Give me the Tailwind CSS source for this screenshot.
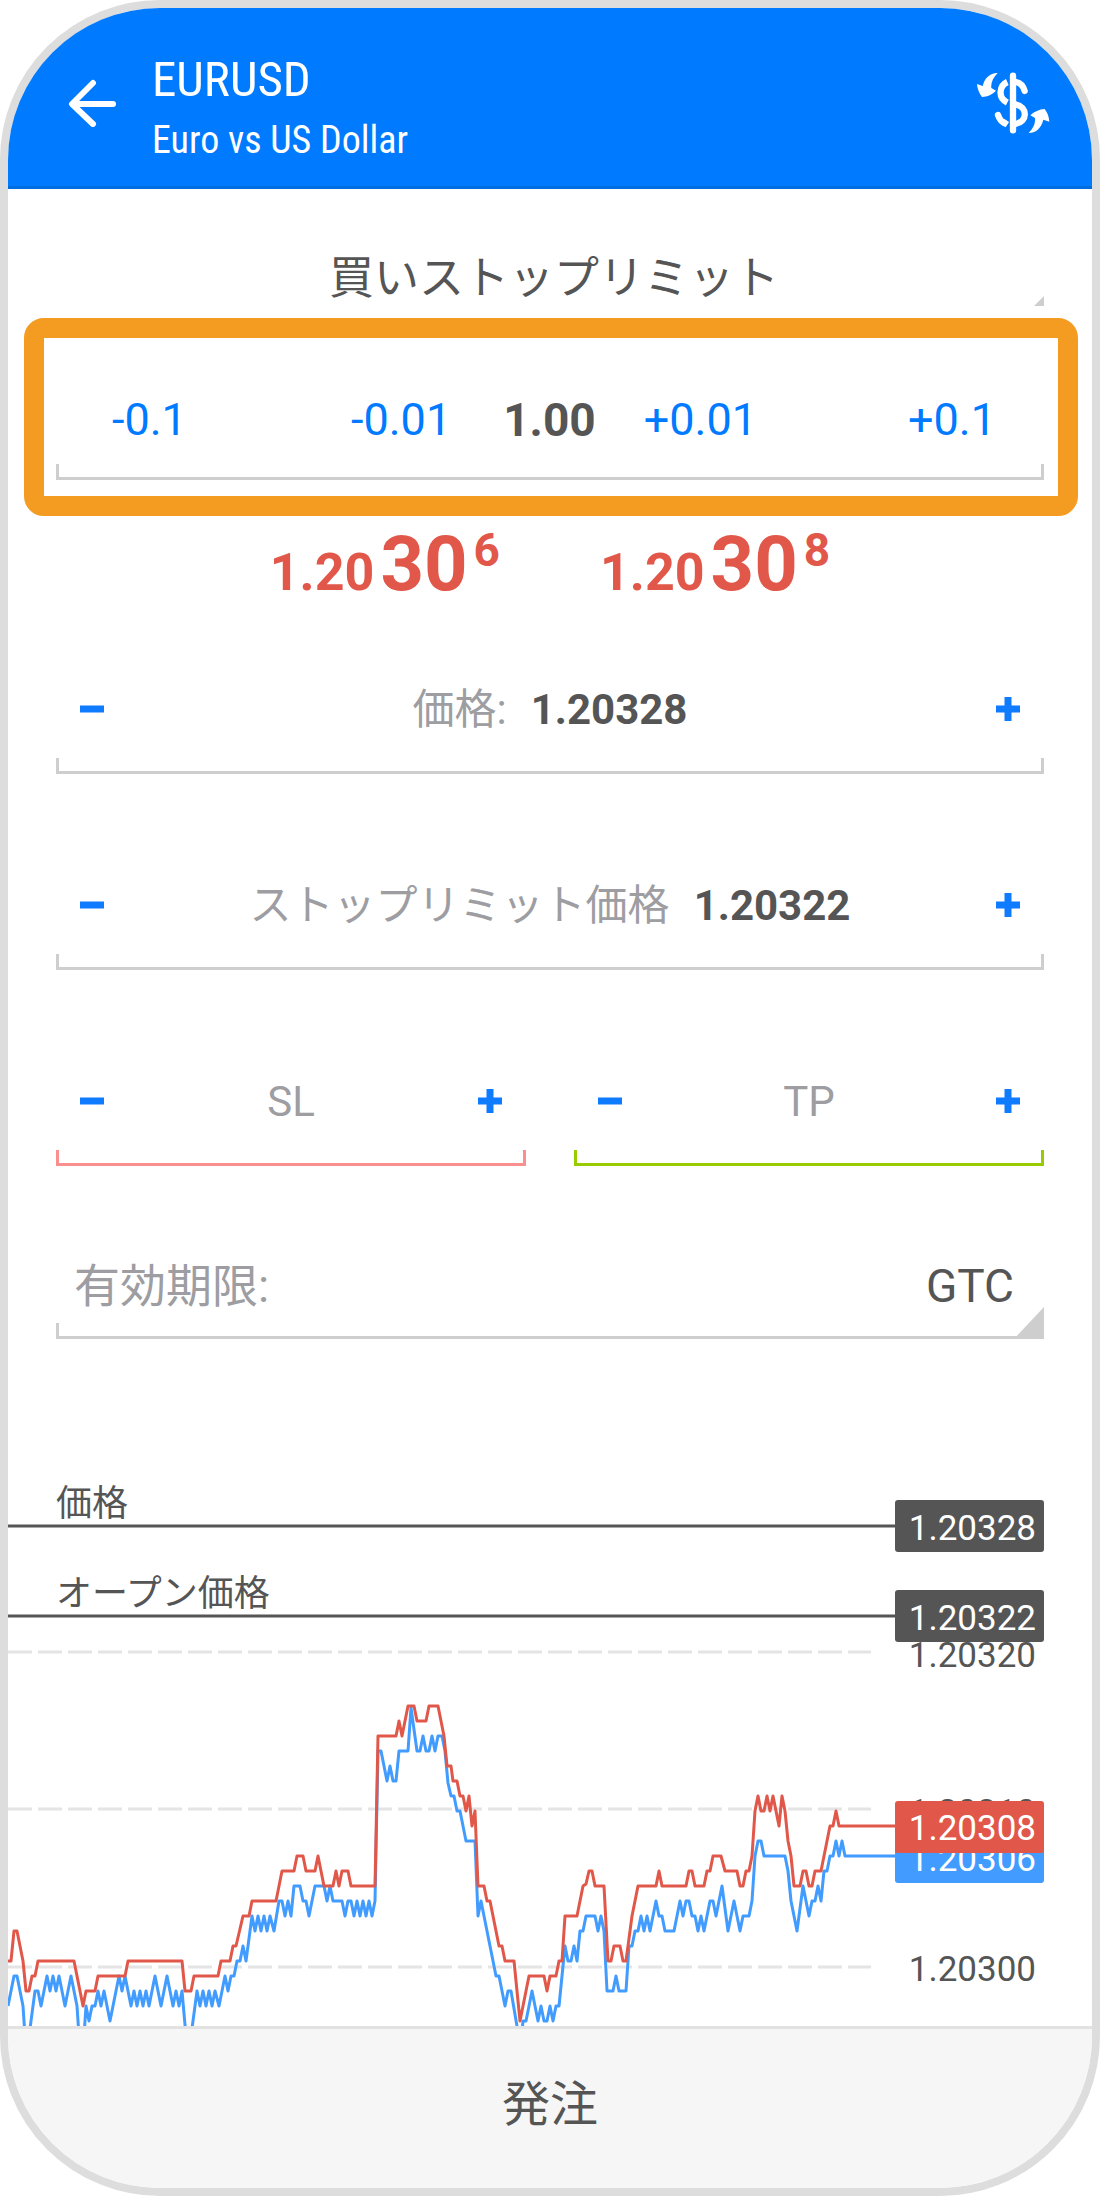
<!DOCTYPE html>
<html lang="ja">
<head>
<meta charset="utf-8">
<meta name="viewport" content="width=device-width, initial-scale=1">
<title>EURUSD 注文</title>
<script src="https://cdn.jsdelivr.net/npm/@tailwindcss/browser@4"></script>
</head>
<body class="bg-white font-['Roboto','Noto_Sans_CJK_JP',sans-serif] text-[#555555]">
<div class="flex min-h-screen flex-col overflow-hidden rounded-[160px] border-8 border-[#dddddd] bg-white">

  <header class="flex h-[181px] items-center border-b-3 border-[#006ee0] bg-[#007aff] pt-3 pr-[42px] pl-15 text-white">
    <button type="button" aria-label="戻る" class="shrink-0">
      <svg class="h-12 w-12" viewBox="0 0 48 48" fill="none" stroke="currentColor" stroke-width="6" stroke-linecap="round" stroke-linejoin="round"><path d="M25 4 4 25l21 20M6 25h39"/></svg>
    </button>
    <div class="flex-1 pt-3 pl-9 font-['Roboto_Condensed','Liberation_Sans_Narrow','Roboto',sans-serif]">
      <h1 class="text-[49px] leading-[62px]">EURUSD</h1>
      <p class="text-[38px] leading-[58px]">Euro vs US Dollar</p>
    </div>
    <button type="button" aria-label="売買" class="shrink-0">
      <svg class="h-[62px] w-[74px]" viewBox="50 42 222 184" fill="none" stroke="currentColor" stroke-width="19" stroke-linecap="round">
        <path d="M161 52V216"/>
        <path d="M170 71Q190 75 196 98M116 170Q122 188 135 194"/>
        <path stroke-linecap="butt" d="M144 71C120 82 114 118 144 133M168 138C206 146 206 190 168 197M144 199L130 190"/>
        <path fill="currentColor" stroke="none" d="M115 44C94 43 76 58 70 83L53 77C54 92 60 106 68 116C84 115 100 108 110 97L96 89C94 74 101 58 115 44ZM208 224C228 224 246 210 252 184L270 190C269 174 264 162 256 152C240 153 224 160 213 171L227 179C229 194 222 210 208 224Z"/>
      </svg>
    </button>
  </header>

  <main class="flex flex-1 flex-col">
    <form id="order" class="flex flex-col">
      <div class="relative mx-12 mt-14 mb-3">
        <select aria-label="注文タイプ" class="h-[61px] w-full appearance-none bg-transparent pb-1 pl-2 text-center text-[45px]">
          <option>買いストップリミット</option>
        </select>
        <svg class="pointer-events-none absolute right-0 bottom-0 h-[10px] w-[10px]" viewBox="0 0 10 10" fill="#cecece"><path d="M10 0V10H0z"/></svg>
      </div>

      <div class="mr-[14px] ml-4 rounded-[20px] border-20 border-[#f49b22] pt-[50px] pr-[14px] pb-4 pl-3">
        <div class="grid grid-cols-[1fr_auto_1fr] items-center pr-12 pl-14 text-[45px] leading-[64px] text-[#007aff]">
          <button type="button" class="justify-self-start">-0.1</button>
          <div class="flex items-center">
            <button type="button">-0.01</button>
            <input aria-label="数量" inputmode="decimal" value="1.00" class="mr-12 ml-13 field-sizing-content text-center text-[46px] font-bold text-[#555555]">
            <button type="button">+0.01</button>
          </div>
          <button type="button" class="justify-self-end">+0.1</button>
        </div>
        <div class="mt-3 h-4 border-x-3 border-b-3 border-[#cecece]"></div>
      </div>

      <div class="flex h-[161px] justify-center gap-25 pt-2 font-bold text-[#e1584a]">
        <p class="flex items-baseline gap-1.5"><span class="text-[52px]">1.20</span><span class="text-[76px] leading-[80px]">30</span><sup class="-top-6 text-[46px]">6</sup></p>
        <p class="flex items-baseline gap-1.5"><span class="text-[52px]">1.20</span><span class="text-[76px] leading-[80px]">30</span><sup class="-top-6 text-[46px]">8</sup></p>
      </div>

      <div class="mx-12">
        <div class="flex h-16 items-center justify-between px-6 text-[42px]">
          <button type="button" aria-label="価格を下げる" class="text-[#0f7bff]"><svg class="h-6 w-6" viewBox="0 0 24 24" stroke="currentColor" stroke-width="7"><path d="M0 12H24"/></svg></button>
          <div class="flex items-center gap-6"><label for="price" class="text-[#9d9da2]">価格:</label><input id="price" inputmode="decimal" value="1.20328" class="field-sizing-content font-bold"></div>
          <button type="button" aria-label="価格を上げる" class="text-[#0f7bff]"><svg class="h-6 w-6" viewBox="0 0 24 24" stroke="currentColor" stroke-width="7"><path d="M0 12H24M12 0V24"/></svg></button>
        </div>
        <div class="mt-[17px] h-4 border-x-3 border-b-3 border-[#cecece]"></div>
      </div>

      <div class="mx-12 mt-[99px]">
        <div class="flex h-16 items-center justify-between px-6 text-[42px]">
          <button type="button" aria-label="ストップリミット価格を下げる" class="text-[#0f7bff]"><svg class="h-6 w-6" viewBox="0 0 24 24" stroke="currentColor" stroke-width="7"><path d="M0 12H24"/></svg></button>
          <div class="flex items-center gap-6"><label for="limit" class="text-[#9d9da2]">ストップリミット価格</label><input id="limit" inputmode="decimal" value="1.20322" class="field-sizing-content font-bold"></div>
          <button type="button" aria-label="ストップリミット価格を上げる" class="text-[#0f7bff]"><svg class="h-6 w-6" viewBox="0 0 24 24" stroke="currentColor" stroke-width="7"><path d="M0 12H24M12 0V24"/></svg></button>
        </div>
        <div class="mt-[17px] h-4 border-x-3 border-b-3 border-[#cecece]"></div>
      </div>

      <div class="mx-12 mt-[99px] grid grid-cols-2 gap-12">
        <div>
          <div class="flex h-16 items-center justify-between px-6 text-[42px]">
            <button type="button" aria-label="SLを下げる" class="text-[#0f7bff]"><svg class="h-6 w-6" viewBox="0 0 24 24" stroke="currentColor" stroke-width="7"><path d="M0 12H24"/></svg></button>
            <input aria-label="SL" inputmode="decimal" placeholder="SL" class="min-w-0 flex-1 text-center placeholder:text-[#9d9da2]">
            <button type="button" aria-label="SLを上げる" class="text-[#0f7bff]"><svg class="h-6 w-6" viewBox="0 0 24 24" stroke="currentColor" stroke-width="7"><path d="M0 12H24M12 0V24"/></svg></button>
          </div>
          <div class="mt-[17px] h-4 border-x-3 border-b-3 border-[#fb8f8f]"></div>
        </div>
        <div>
          <div class="flex h-16 items-center justify-between px-6 text-[42px]">
            <button type="button" aria-label="TPを下げる" class="text-[#0f7bff]"><svg class="h-6 w-6" viewBox="0 0 24 24" stroke="currentColor" stroke-width="7"><path d="M0 12H24"/></svg></button>
            <input aria-label="TP" inputmode="decimal" placeholder="TP" class="min-w-0 flex-1 text-center placeholder:text-[#9d9da2]">
            <button type="button" aria-label="TPを上げる" class="text-[#0f7bff]"><svg class="h-6 w-6" viewBox="0 0 24 24" stroke="currentColor" stroke-width="7"><path d="M0 12H24M12 0V24"/></svg></button>
          </div>
          <div class="mt-[17px] h-4 border-x-3 border-b-3 border-[#99cc00]"></div>
        </div>
      </div>

      <div class="relative mx-12 mt-22">
        <div class="flex h-16 items-center justify-between pr-[30px] pl-[18px] text-[46px]">
          <label for="expiry" class="text-[#9d9da2]">有効期限:</label>
          <select id="expiry" class="appearance-none bg-transparent text-right"><option>GTC</option></select>
        </div>
        <div class="mt-[5px] h-4 border-x-3 border-b-3 border-[#cecece]"></div>
        <svg class="pointer-events-none absolute right-0 bottom-0 h-8 w-[30px]" viewBox="0 0 30 32" fill="#cecece"><path d="M30 0V32H0z"/></svg>
      </div>
    </form>

    <!-- Tick chart: the plot stretches sideways, price labels sit in the right-hand scale -->
    <section aria-label="ティックチャート" class="relative mt-[121px] flex h-[566px] overflow-hidden text-[36px] leading-[52px]">
      <svg class="h-full min-w-0 flex-1" viewBox="0 0 887 566" preserveAspectRatio="none" fill="none" stroke-width="2" stroke-linejoin="round">
        <g stroke="#e4e4e4" stroke-width="3" stroke-dasharray="24 6"><path vector-effect="non-scaling-stroke" d="M0 192H863"/><path vector-effect="non-scaling-stroke" d="M0 349H863"/><path vector-effect="non-scaling-stroke" d="M0 507H863"/></g>
        <path vector-effect="non-scaling-stroke" stroke="#555555" stroke-width="3" d="M0 66H887M0 156H887"/>
        <polyline vector-effect="non-scaling-stroke" stroke="#429cff" stroke-width="3" points="0,546 6,516 9,516 15,546 17,576 21,576 27,531 30,531 33,546 39,516 42,531 45,516 48,531 51,516 57,546 63,516 69,546 71,576 76,576 78,546 81,561 84,546 87,546 90,531 93,546 96,531 102,561 111,516 114,531 117,516 123,546 126,531 129,546 132,531 135,546 138,531 141,546 147,516 153,546 159,516 165,546 168,531 171,546 174,531 178,576 183,576 189,531 192,546 195,531 198,546 201,531 204,546 207,531 211,546 217,516 220,531 223,516 226,516 229,501 232,501 235,486 238,501 244,456 247,471 250,456 253,471 256,456 259,471 262,456 266,471 271,441 274,441 277,456 280,441 283,456 286,426 292,426 295,441 298,441 301,456 307,426 316,426 319,441 322,426 325,441 334,441 337,456 340,441 343,441 346,456 349,441 352,456 355,441 358,456 361,441 364,456 367,441 370,291 373,291 379,321 382,306 385,321 388,321 391,291 400,291 403,248 409,291 412,291 415,276 418,291 421,291 424,276 427,291 430,276 434,276 437,291 440,323 443,336 446,336 449,351 452,351 458,381 467,381 470,456 473,441 488,516 491,516 497,546 500,531 503,531 510,572 514,572 515,561 518,561 524,531 530,561 533,546 536,561 539,561 542,546 545,561 548,546 551,546 557,486 560,501 563,501 566,486 569,501 572,471 575,471 578,456 587,456 590,471 593,456 596,471 599,531 605,531 608,516 611,531 618,531 621,486 624,486 627,471 630,471 633,456 636,471 639,456 642,471 648,441 651,456 654,456 657,471 666,471 672,441 675,456 678,441 681,441 684,456 687,456 690,471 693,456 696,471 702,441 705,441 708,456 714,426 720,471 726,441 732,471 735,456 741,456 744,441 747,396 750,381 753,381 756,396 777,396 780,411 783,441 789,471 795,426 801,456 804,441 807,441 810,426 813,441 816,411 819,411 822,396 825,396 828,381 831,396 834,381 837,396 887,396"/>
        <polyline vector-effect="non-scaling-stroke" stroke="#e1584a" stroke-width="3" points="0,501 3,501 6,471 9,471 15,501 18,531 21,531 24,516 27,516 30,501 66,501 75,546 78,531 87,531 90,516 117,516 120,501 174,501 177,531 183,531 186,516 210,516 213,501 222,501 225,486 228,486 235,456 241,456 244,441 268,441 274,411 286,411 289,396 295,396 298,411 307,411 310,396 316,426 325,426 328,411 331,426 334,411 340,411 343,426 367,426 370,276 388,276 391,261 394,276 400,246 406,246 409,261 418,261 421,246 430,246 436,276 439,306 443,306 445,321 449,321 452,336 455,336 458,351 461,336 464,366 467,351 470,426 476,426 479,441 482,441 491,486 494,486 497,501 506,501 512,561 521,516 536,516 539,531 542,516 548,516 551,501 554,501 557,456 569,456 575,426 578,424 581,411 584,411 587,426 596,426 600,501 603,501 606,486 612,486 615,501 618,501 624,456 630,426 648,426 651,411 654,426 678,426 681,411 684,411 687,426 696,426 699,411 702,411 705,396 713,396 717,411 729,411 732,426 735,426 738,411 741,411 744,396 747,351 750,336 753,351 756,351 759,336 762,351 765,336 771,366 774,336 777,351 780,381 783,396 786,426 792,426 795,411 798,411 801,426 804,426 807,411 813,411 822,366 825,366 828,351 831,366 887,366"/>
      </svg>
      <p class="absolute top-[18px] left-12">価格</p>
      <p class="absolute top-[108px] left-12">オープン価格</p>
      <div class="relative mr-12 w-[149px] shrink-0 text-right text-[35px]">
        <span class="absolute top-[170px] right-2">1.20320</span>
        <span class="absolute top-[327px] right-2">1.20310</span>
        <span class="absolute top-[484px] right-2">1.20300</span>
        <span class="absolute inset-x-0 top-10 h-13 rounded-[3px] bg-[#555555] pr-2 leading-[58px] text-white">1.20328</span>
        <span class="absolute inset-x-0 top-[130px] h-13 rounded-[3px] bg-[#555555] pr-2 leading-[58px] text-white">1.20322</span>
        <span class="absolute inset-x-0 top-[371px] h-13 rounded-[3px] bg-[#429cff] pr-2 leading-[58px] text-white">1.20306</span>
        <span class="absolute inset-x-0 top-[341px] h-13 rounded-[3px] bg-[#e1584a] pr-2 leading-[56px] text-white">1.20308</span>
      </div>
    </section>
  </main>

  <button type="submit" form="order" class="h-[162px] border-t-3 border-[#e2e2e2] bg-[#f6f6f6] pb-2 text-[48px]">発注</button>
</div>
</body>
</html>
